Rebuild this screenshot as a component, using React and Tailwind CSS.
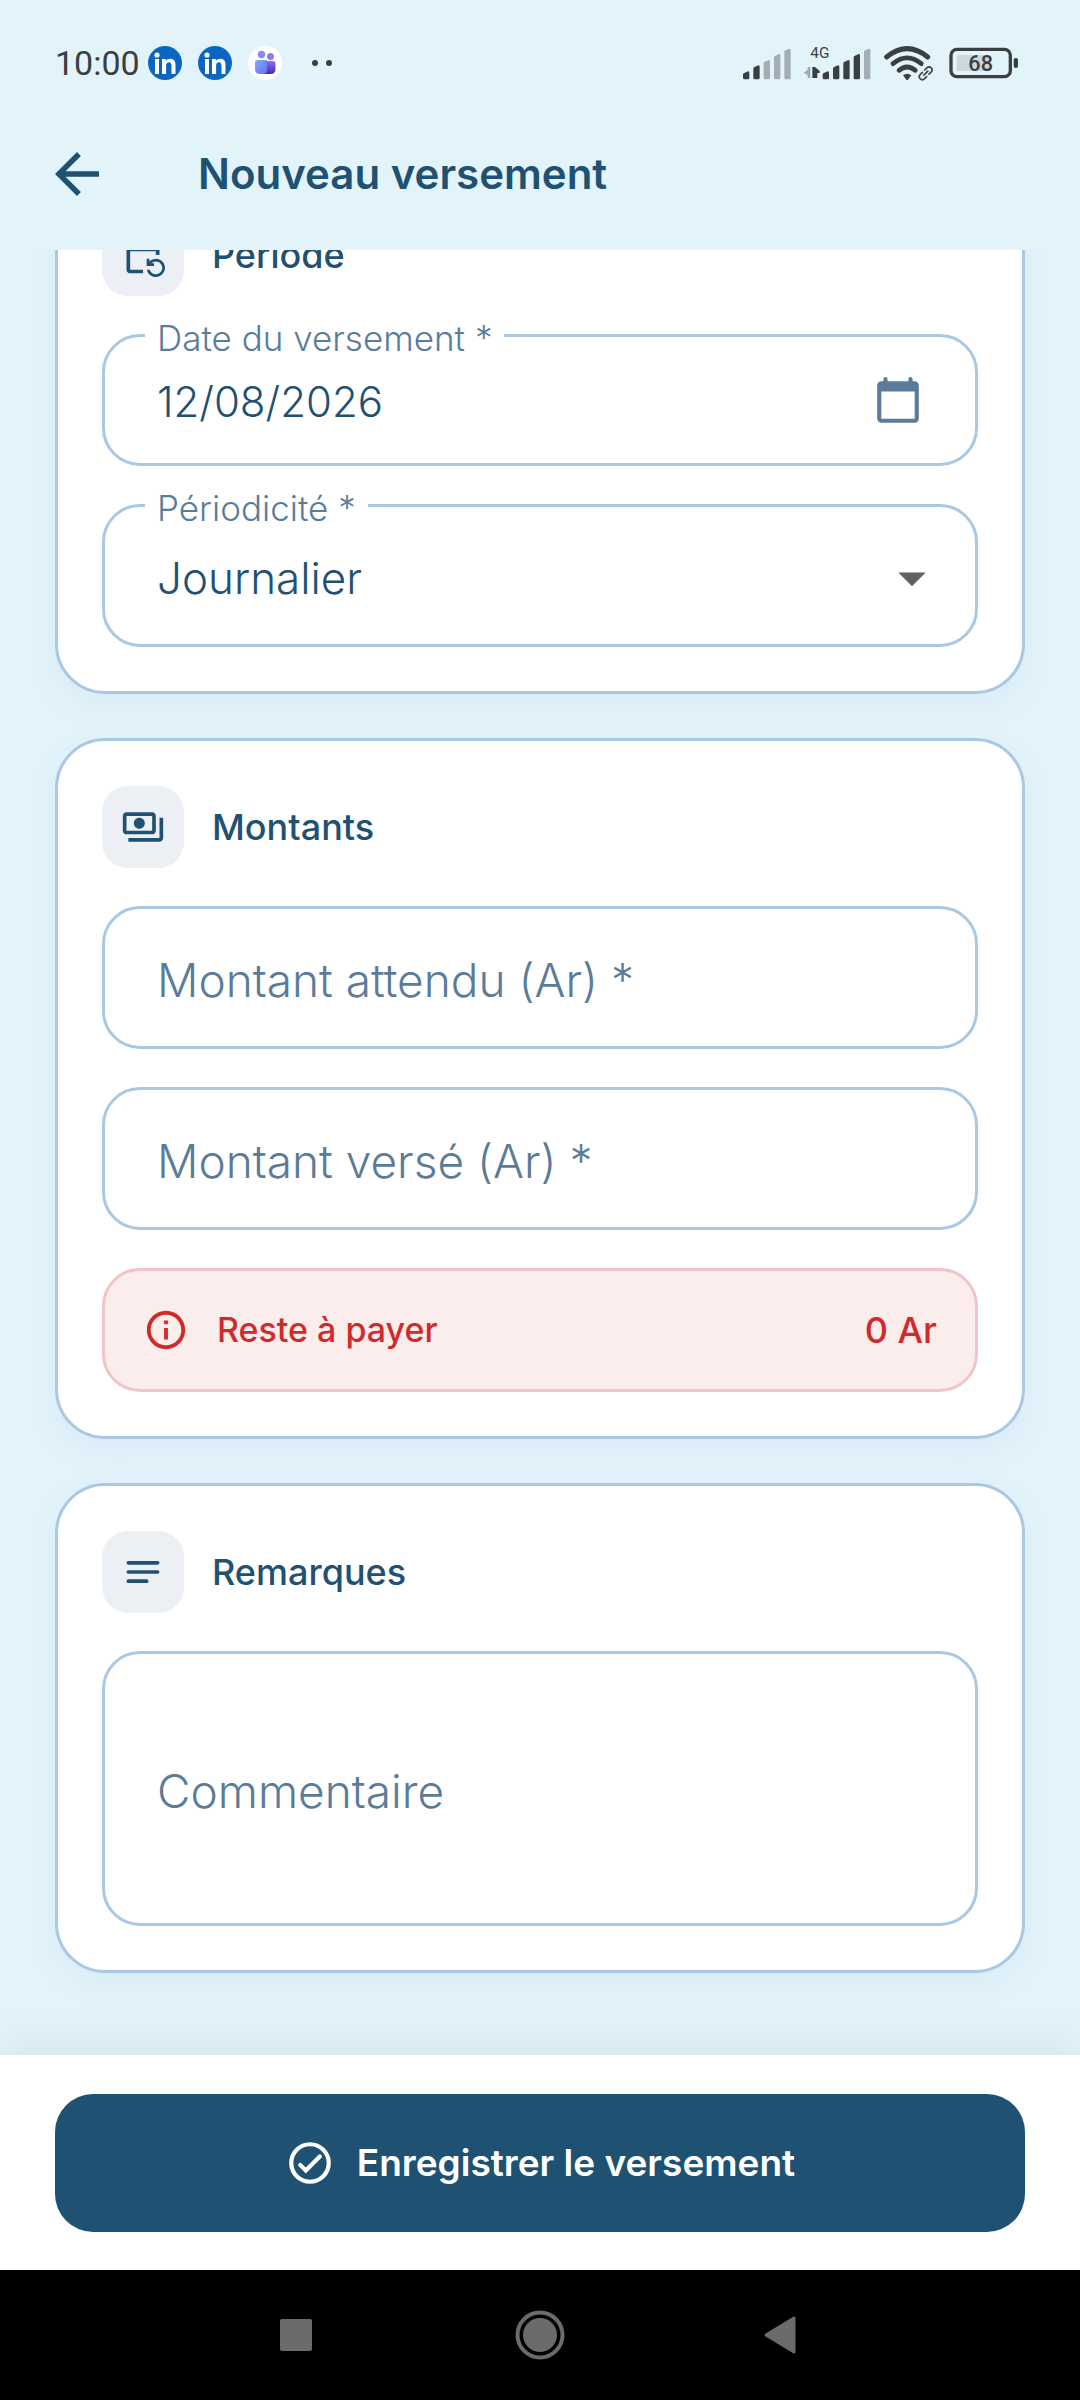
import { useState } from "react";
import { MdArrowBack, MdArrowDropDown, MdInfoOutline, MdOutlinePayments } from "react-icons/md";

function App() {
  const [date, setDate] = useState("12/08/2026");
  const [period, setPeriod] = useState("Journalier");
  const [expected, setExpected] = useState("");
  const [paid, setPaid] = useState("");
  const [comment, setComment] = useState("");

  const remaining = (Number(expected) || 0) - (Number(paid) || 0);

  return (
    <div className="h-screen flex flex-col bg-[#e3f3fa] text-[#1f5172] font-['Inter',sans-serif]">
      <StatusBar />

      {/* App bar */}
      <header className="h-[152px] shrink-0 flex items-center gap-[88px] px-[44px]">
        <button aria-label="Retour">
          <MdArrowBack className="size-[66px]" />
        </button>
        <h1 className="text-[42px] leading-[56px] font-semibold">Nouveau versement</h1>
      </header>

      {/* Form, opened at its end */}
      <main className="flex-1 min-h-0 flex flex-col-reverse overflow-y-auto [scrollbar-width:none]">
        <form id="payment" className="flex flex-col gap-[44px] px-[55px] pt-[44px] pb-[82px]">
          <Section title="Période" icon={<EventRepeatIcon />}>
            <Field id="date" label="Date du versement *" className="h-[132px]">
              <input
                id="date"
                value={date}
                onChange={(e) => setDate(e.target.value)}
                className="flex-1 min-w-0 outline-none text-[42px] leading-[56px] font-light"
              />
              <button type="button" aria-label="Choisir une date" className="mr-[22px] text-[#5b7c99]">
                <CalendarIcon />
              </button>
            </Field>
            <Field id="period" label="Périodicité *" className="h-[143px]">
              <select
                id="period"
                value={period}
                onChange={(e) => setPeriod(e.target.value)}
                className="flex-1 min-w-0 appearance-none outline-none text-[44px] leading-[56px] font-light"
              >
                <option>Journalier</option>
                <option>Hebdomadaire</option>
                <option>Mensuel</option>
              </select>
              <MdArrowDropDown className="size-[66px] text-[#616161] pointer-events-none" />
            </Field>
          </Section>

          <Section title="Montants" icon={<MdOutlinePayments className="size-[44px]" />}>
            <Field className="h-[143px]">
              <input
                aria-label="Montant attendu (Ar) *"
                placeholder="Montant attendu (Ar) *"
                inputMode="numeric"
                value={expected}
                onChange={(e) => setExpected(e.target.value)}
                className="flex-1 min-w-0 outline-none text-[46px] leading-[56px] font-light placeholder:text-[#5b7c99]"
              />
            </Field>
            <Field className="h-[143px]">
              <input
                aria-label="Montant versé (Ar) *"
                placeholder="Montant versé (Ar) *"
                inputMode="numeric"
                value={paid}
                onChange={(e) => setPaid(e.target.value)}
                className="flex-1 min-w-0 outline-none text-[46px] leading-[56px] font-light placeholder:text-[#5b7c99]"
              />
            </Field>
            <div className="h-[124px] flex items-center px-[38px] rounded-[38px] border-[3px] border-[#f1c5c7] bg-[#fceded] text-[#d02a2a] font-medium">
              <MdInfoOutline className="size-[46px]" />
              <span className="ml-[28px] text-[34px] leading-[44px]">Reste à payer</span>
              <span className="ml-auto text-[36px] leading-[48px]">{remaining} Ar</span>
            </div>
          </Section>

          <Section title="Remarques" icon={<NotesIcon />}>
            <Field className="h-[275px]">
              <textarea
                aria-label="Commentaire"
                placeholder="Commentaire"
                rows={1}
                value={comment}
                onChange={(e) => setComment(e.target.value)}
                className="flex-1 min-w-0 resize-none outline-none text-[46px] leading-[56px] font-light placeholder:text-[#5b7c99]"
              />
            </Field>
          </Section>
        </form>
      </main>

      {/* Submit */}
      <footer className="relative shrink-0 bg-white px-[55px] pt-[39px] pb-[38px] shadow-[0_-11px_44px_rgba(0,0,0,0.06)]">
        <button
          form="payment"
          className="w-full h-[138px] flex items-center justify-center gap-[22px] rounded-[38px] bg-[#1f5172] text-white text-[37px] leading-[48px] font-semibold"
        >
          <CheckIcon />
          Enregistrer le versement
        </button>
      </footer>

      <NavBar />
    </div>
  );
}

function Section({ title, icon, children }) {
  return (
    <section className="flex flex-col gap-[38px] p-[44px] rounded-[50px] border-[3px] border-[#a8c8e3] bg-white shadow-[0_11px_33px_rgba(33,97,190,0.05)]">
      <div className="h-[83px] flex items-center gap-[28px]">
        <div className="size-[82px] flex items-center justify-center rounded-[26px] bg-[#ecf0f4]">{icon}</div>
        <h2 className="text-[36px] leading-[48px] font-medium">{title}</h2>
      </div>
      {children}
    </section>
  );
}

function Field({ id, label, className, children }) {
  return (
    <div className={`relative flex items-center pt-[4px] pl-[52px] pr-[30px] rounded-[38px] border-[3px] border-[#a8c8e3] ${className}`}>
      {label && (
        <label
          htmlFor={id}
          className="absolute left-[40px] -top-[21px] px-[12px] bg-white text-[#5b7c99] text-[35px] leading-[44px] font-light"
        >
          {label}
        </label>
      )}
      {children}
    </div>
  );
}

function StatusBar() {
  return (
    <div className="h-[98px] shrink-0 flex items-center pt-[28px] pl-[55px] pr-[62px] text-[#3a3f42] font-['Roboto',sans-serif]">
      <span className="text-[34px] leading-[40px]">10:00</span>
      <div className="flex items-center gap-[16px] ml-[8px]">
        <LinkedInIcon />
        <LinkedInIcon />
        <TeamsIcon />
      </div>
      <svg viewBox="0 0 20 6" className="w-[20px] h-[6px] ml-[30px]" fill="currentColor">
        <circle cx="3" cy="3" r="3" />
        <circle cx="17" cy="3" r="3" />
      </svg>

      <div className="flex items-center gap-[12px] ml-auto">
        <svg viewBox="130 72 144 114" className="w-[48px] h-[38px]" fill="currentColor">
          <SignalBars x={130} level={2} />
        </svg>
        <svg viewBox="308 72 204 114" className="w-[68px] h-[38px]" fill="currentColor">
          <text x="330" y="113" fontSize="46">4G</text>
          <path d="M322 141h8v33h-8v-8l-12-8 12-9z" opacity=".4" />
          <path d="M336 141h8l14 12v6h-7v15h-15z" />
          <SignalBars x={367} level={4} />
        </svg>
        <WifiIcon />
        <svg viewBox="745 72 207 114" className="w-[69px] h-[38px] ml-[2px]" fill="currentColor">
          <rect x="751" y="88" width="178" height="82" rx="18" fill="none" stroke="currentColor" strokeWidth="10" />
          <rect x="768" y="105" width="96" height="48" rx="6" fill="#cbd8df" />
          <rect x="939" y="114" width="13" height="30" rx="6" />
          <text x="803" y="153" fontSize="65" fontWeight="500">68</text>
        </svg>
      </div>
    </div>
  );
}

function SignalBars({ x, level }) {
  return [154, 136, 120, 102, 86].map((top, i) => (
    <path
      key={top}
      transform={`translate(${x + i * 31} 0)`}
      d={`M0 ${top + 10}q0-4 4-5l11-5q4 0 4 4V174q0 4-4 4H4q-4 0-4-4z`}
      opacity={i < level ? 1 : 0.38}
    />
  ));
}

function WifiIcon() {
  return (
    <svg viewBox="548 72 156 114" className="w-[52px] h-[38px]" fill="none" stroke="currentColor" strokeLinecap="round">
      <path d="M559 111q61-50 123 0" strokeWidth="15" />
      <path d="M578 131q42-35 85 0" strokeWidth="14" />
      <path d="M596 151q24-20 49 0" strokeWidth="14" />
      <path d="M608 166q12-9 25 0l-10 13q-3 2-5 0z" fill="currentColor" stroke="none" />
      <g strokeWidth="5" transform="rotate(-45 676 160)">
        <path d="M671 151h-9a9 9 0 0 0 0 18h9M681 151h9a9 9 0 0 1 0 18h-9M668 160h17" />
      </g>
    </svg>
  );
}

function LinkedInIcon() {
  return (
    <svg viewBox="0 0 34 34" className="size-[34px]">
      <circle cx="17" cy="17" r="17" fill="#0a66c2" />
      <g fill="#fff">
        <circle cx="9" cy="9" r="2.6" />
        <path d="M7 13h4v15H7zM14 13h3.8v2c.9-1.500 2.400-2.300 4.400-2.300 4.100 0 5.300 2.600 5.300 6.500V28h-4v-7.800c0-2-.4-3.900-2.500-3.900s-2.900 1.600-2.900 3.700v8H14z" />
      </g>
    </svg>
  );
}

function TeamsIcon() {
  return (
    <svg viewBox="0 0 34 34" className="size-[34px]">
      <defs>
        <linearGradient id="teamsFront" x1="0" y1="0" x2="1" y2="1">
          <stop offset="0" stopColor="#7db2fa" />
          <stop offset="1" stopColor="#6a6bf3" />
        </linearGradient>
        <linearGradient id="teamsBack" x1="0" y1="0" x2="0" y2="1">
          <stop offset="0" stopColor="#8f6cf5" />
          <stop offset="1" stopColor="#3c2fa8" />
        </linearGradient>
      </defs>
      <circle cx="17" cy="17" r="17" fill="#fff" />
      <circle cx="22.500" cy="10.500" r="3.500" fill="#8b7cf3" />
      <circle cx="13.500" cy="8.500" r="3.700" fill="#9186f5" />
      <path d="M17 15h8q2.500 0 2.500 2.500V23q0 5-5 5H15z" fill="url(#teamsBack)" />
      <path d="M9.500 14H19v10q0 4-4 4h-3q-5 0-5-5v-6.500Q7 14 9.500 14z" fill="url(#teamsFront)" />
    </svg>
  );
}

function EventRepeatIcon() {
  return (
    <svg viewBox="0 0 24 24" className="size-[44px]" fill="currentColor">
      <path d="M21 12V6c0-1.100-.9-2-2-2h-1V3a1 1 0 0 0-2 0v1H8V3a1 1 0 0 0-2 0v1H5c-1.100 0-2 .9-2 2v14c0 1.100.9 2 2 2h7v-2H5V10h14v2h2z" />
      <path d="M15.640 20c.43 1.450 1.770 2.500 3.360 2.500 1.930 0 3.500-1.570 3.500-3.500s-1.570-3.500-3.500-3.500c-.95 0-1.820.38-2.450 1H18V18h-4v-4h1.500v1.430A4.980 4.980 0 0 1 19 14c2.760 0 5 2.240 5 5s-2.240 5-5 5c-2.420 0-4.440-1.720-4.900-4h1.540z" />
    </svg>
  );
}

function CalendarIcon() {
  return (
    <svg viewBox="0 0 24 24" className="size-[50px]" fill="none" stroke="currentColor" strokeWidth="2">
      <rect x="3" y="3" width="18" height="18" rx="1" />
      <path d="M3 3h18v4H3z" fill="currentColor" stroke="none" />
      <path d="M6 1v2M18 1v2" strokeLinecap="round" />
    </svg>
  );
}

function NotesIcon() {
  return (
    <svg viewBox="0 0 24 24" className="size-[44px]" fill="none" stroke="currentColor" strokeWidth="2" strokeLinecap="round">
      <path d="M4 7h16M4 12h16M4 17h10" />
    </svg>
  );
}

function CheckIcon() {
  return (
    <svg viewBox="0 0 24 24" className="size-[50px]" fill="none" stroke="currentColor" strokeWidth="2" strokeLinecap="round">
      <circle cx="12" cy="12" r="9" />
      <path d="M7.300 12.900l2.700 2.700 6.700-6.700" />
    </svg>
  );
}

function NavBar() {
  return (
    <nav className="h-[130px] shrink-0 flex items-center justify-center gap-[164px] bg-black text-[#6b6b6b]">
      <button aria-label="Applications récentes">
        <svg viewBox="0 0 80 80" className="size-[80px]" fill="currentColor">
          <rect x="24" y="24" width="32" height="32" rx="2" />
        </svg>
      </button>
      <button aria-label="Accueil">
        <svg viewBox="0 0 80 80" className="size-[80px]" fill="currentColor">
          <circle cx="40" cy="40" r="17" />
          <circle cx="40" cy="40" r="22.500" fill="none" stroke="currentColor" strokeWidth="4" />
        </svg>
      </button>
      <button aria-label="Précédent">
        <svg viewBox="0 0 80 80" className="size-[80px]" fill="currentColor" stroke="currentColor" strokeWidth="3" strokeLinejoin="round">
          <path d="M22 40l28-17v34z" />
        </svg>
      </button>
    </nav>
  );
}

export default App;
